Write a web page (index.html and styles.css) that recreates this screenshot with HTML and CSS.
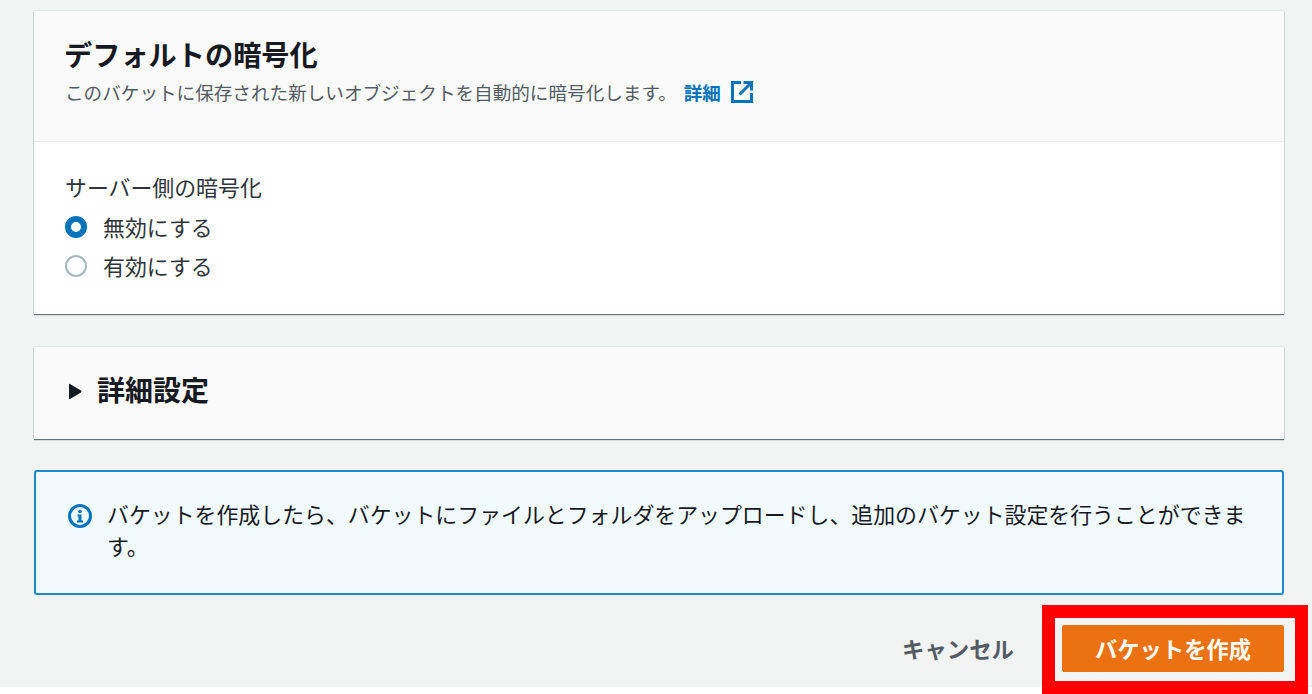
FILE: index.html
```html
<!DOCTYPE html>
<html lang="ja">
<head>
<meta charset="utf-8">
<title>バケットを作成</title>
<link rel="stylesheet" href="styles.css">
</head>
<body>
<main class="page">
  <section class="card card-encryption">
    <header class="card-header">
      <h2 class="title">デフォルトの暗号化</h2>
      <p class="subtitle">このバケットに保存された新しいオブジェクトを自動的に暗号化します。<a class="link" href="#">詳細</a>
        <svg class="ext-icon" viewBox="0 0 22 22" width="22" height="22" aria-hidden="true">
          <path d="M10 1.500H1.500v19h19V12" fill="none" stroke="#0073bb" stroke-width="3"/>
          <path d="M8.500 13.500 19.500 2.500M12.500 1.500h8V9.500" fill="none" stroke="#0073bb" stroke-width="3"/>
        </svg>
      </p>
    </header>
    <div class="card-body">
      <div class="field-label">サーバー側の暗号化</div>
      <label class="radio-row"><span class="radio radio-on"></span>無効にする</label>
      <label class="radio-row"><span class="radio"></span>有効にする</label>
    </div>
  </section>

  <section class="card card-advanced">
    <svg class="caret" viewBox="0 0 14 17" width="14" height="17" aria-hidden="true"><path d="M1 1.500q0-1 1-.5L13 7.500q1 1 0 2L2 16q-1 .5-1-.5z" fill="#16191f"/></svg>
    <h2 class="advanced-title">詳細設定</h2>
  </section>

  <section class="alert">
    <svg class="info-icon" viewBox="0 0 26 26" width="26" height="26" aria-hidden="true">
      <circle cx="13" cy="13" r="10.500" fill="none" stroke="#0073bb" stroke-width="3"/>
      <circle cx="13" cy="8.500" r="1.800" fill="#0073bb"/>
      <path d="M10.500 11.500h4v6h1.500v2h-6v-2h1.500v-4h-1z" fill="#0073bb"/>
    </svg>
    <p class="alert-text">バケットを作成したら、バケットにファイルとフォルダをアップロードし、追加のバケット設定を行うことができます。</p>
  </section>

  <footer class="actions">
    <a class="cancel" href="#">キャンセル</a>
    <button class="primary" type="button">バケットを作成</button>
    <span class="highlight"></span>
  </footer>
</main>
</body>
</html>
```
FILE: styles.css
```css
* { box-sizing: border-box; }
html, body { margin: 0; padding: 0; background: #fff; }
body {
  width: 1312px;
  height: 694px;
  overflow: hidden;
  font-family: "Noto Sans CJK JP", "Noto Sans", sans-serif;
  color: #16191f;
}
.page {
  height: 687px;
  background: #f2f3f3;
  padding: 11px 28px 0 34px;
  display: flex;
  flex-direction: column;
}
.card {
  background: #fff;
  box-shadow: 0 1px 1px 0 #687078, 0 0 1px 0 #aab7b8;
}
.card-encryption { height: 303px; }
.card-header {
  height: 131px;
  padding: 22px 31px 0 30px;
  background: #fafafa;
  border-bottom: 1px solid #eaeded;
}
.title {
  margin: 0;
  font-size: 28.2px;
  line-height: 42px;
  font-weight: 700;
  color: #16191f;
}
.subtitle {
  margin: 0 0 0 1px;
  display: flex;
  align-items: center;
  font-size: 18.6px;
  line-height: 34px;
  color: #545b64;
}
.link {
  font-weight: 700;
  color: #0073bb;
  text-decoration: none;
  margin-left: 7px;
  font-size: 18.500px;
}
.ext-icon { margin-left: 10px; }
.card-body { padding: 29px 32px 0 31px; }
.field-label {
  height: 36px;
  font-size: 21.9px;
  line-height: 32px;
  color: #2f343b;
}
.radio-row {
  display: flex;
  align-items: center;
  height: 39px;
  font-size: 21.9px;
  color: #2f343b;
}
.radio {
  width: 22px;
  height: 22px;
  border-radius: 50%;
  border: 2px solid #aab7b8;
  background: #fff;
  margin-right: 16px;
}
.radio-on { border: 6px solid #0073bb; }
.card-advanced {
  margin-top: 33px;
  height: 92px;
  background: #fafafa;
  display: flex;
  align-items: center;
  padding: 0 0 4px 34px;
}
.caret { margin-right: 15px; }
.advanced-title {
  margin: 0 0 4px;
  font-size: 28px;
  line-height: 40px;
  font-weight: 700;
}
.alert {
  margin-top: 31px;
  height: 125px;
  border: 2px solid #1f8ac9;
  border-radius: 3px;
  background: #f1faff;
  display: flex;
  padding: 26px 30px 0 31px;
}
.info-icon { flex: none; margin-right: 14px; margin-top: 5px; }
.alert-text {
  margin: 0;
  width: 1150px;
  font-size: 21.9px;
  line-height: 32px;
  color: #16191f;
}
.actions {
  position: relative;
  flex: 1;
  display: flex;
  align-items: center;
  justify-content: flex-end;
  padding-top: 14px;
}
.cancel {
  font-size: 22.4px;
  font-weight: 700;
  color: #545b64;
  text-decoration: none;
  margin-right: 48px;
}
.primary {
  width: 222px;
  height: 47px;
  border: 1px solid #ec7211;
  border-radius: 2px;
  background: #ec7211;
  color: #fff;
  font-family: inherit;
  font-size: 22.300px;
  font-weight: 700;
  padding: 0;
}
.highlight {
  position: absolute;
  right: -24px;
  top: 10px;
  width: 266px;
  height: 89px;
  border: 13px solid #f00;
  pointer-events: none;
}
```
